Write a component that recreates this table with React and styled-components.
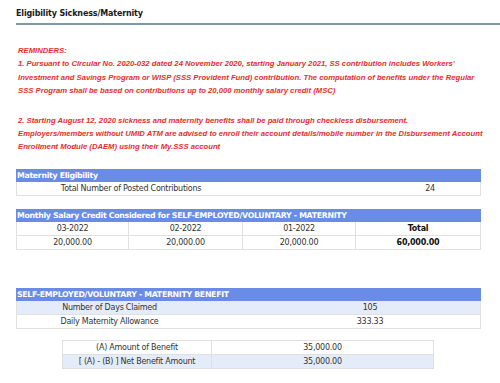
import React from 'react';
import styled, { createGlobalStyle } from 'styled-components';

const GlobalStyle = createGlobalStyle`
  body {
    margin: 0;
    background: #fff;
    font-family: "DejaVu Sans", Verdana, sans-serif;
  }
`;

const Page = styled.div`
  width: 500px;
  height: 383px;
  overflow: hidden;
  padding-top: 8px;
  box-sizing: border-box;
`;

const Title = styled.h4`
  margin: 0 0 0 16px;
  padding-bottom: 4px;
  border-bottom: 2px solid #8096ae;
  font-size: 8px;
  font-weight: bold;
  letter-spacing: -0.15px;
  color: #1a1a1a;
  line-height: 11px;
`;

const Content = styled.div`
  padding: 0 19px 0 16px;
`;

const Reminders = styled.div`
  margin-top: 19px;
  padding-left: 2px;
  font-family: "Liberation Sans", Arial, sans-serif;
  font-size: 7.7px;
  font-weight: bold;
  font-style: italic;
  line-height: 13.4px;
  white-space: nowrap;
  color: #e3302e;

  p {
    margin: 0 0 16px;
  }
  p:last-child {
    margin-bottom: 0;
  }
`;

const Gap = styled.div`
  height: ${p => p.h}px;
`;

const Table = styled.div`
  display: grid;
  grid-template-columns: ${p => p.cols};
  width: ${p => p.w || '465px'};
  margin-left: ${p => p.ml || 0}px;
  font-size: 8px;
  letter-spacing: -0.25px;
  color: #333;
`;

const Head = styled.div`
  grid-column: 1 / -1;
  height: 13px;
  line-height: 13px;
  padding-left: 1px;
  background: #6a8ce6;
  color: #fff;
  font-size: 7.8px;
  font-weight: bold;
  letter-spacing: -0.3px;
`;

const Cell = styled.div`
  height: 13px;
  line-height: 13px;
  text-align: center;
  white-space: nowrap;
  background: ${p => (p.alt ? '#e4ecf9' : '#fff')};
  border-top: ${p => (p.top ? '1px solid #e0e0e0' : 'none')};
  border-bottom: 1px solid #e0e0e0;
  border-left: ${p => (p.first ? '1px solid #e0e0e0' : 'none')};
  border-right: ${p => (p.line ? '1px solid #e0e0e0' : 'none')};
  font-weight: ${p => (p.bold ? 'bold' : 'normal')};
  color: ${p => (p.bold ? '#111' : '#333')};
`;

export default function App() {
  return (
    <Page>
      <GlobalStyle />
      <Title>Eligibility Sickness/Maternity</Title>
      <Content>
        <Reminders>
          <p>
            REMINDERS:
            <br />
            1. Pursuant to Circular No. 2020-032 dated 24 November 2020, starting January 2021, SS contribution includes Workers'
            <br />
            Investment and Savings Program or WISP (SSS Provident Fund) contribution. The computation of benefits under the Regular
            <br />
            SSS Program shall be based on contributions up to 20,000 monthly salary credit (MSC)
          </p>
          <p>
            2. Starting August 12, 2020 sickness and maternity benefits shall be paid through checkless disbursement.
            <br />
            Employers/members without UMID ATM are advised to enroll their account details/mobile number in the Disbursement Account
            <br />
            Enrollment Module (DAEM) using their My.SSS account
          </p>
        </Reminders>

        <Gap h={15} />
        <Table cols="229px 135px 101px">
          <Head>Maternity Eligibility</Head>
          <Cell first>Total Number of Posted Contributions</Cell>
          <Cell />
          <Cell line>24</Cell>
        </Table>

        <Gap h={13} />
        <Table cols="113px 114px 113px 125px">
          <Head>Monthly Salary Credit Considered for SELF-EMPLOYED/VOLUNTARY - MATERNITY</Head>
          <Cell first line>03-2022</Cell>
          <Cell line>02-2022</Cell>
          <Cell line>01-2022</Cell>
          <Cell line bold>Total</Cell>
          <Cell first line>20,000.00</Cell>
          <Cell line>20,000.00</Cell>
          <Cell line>20,000.00</Cell>
          <Cell line bold>60,000.00</Cell>
        </Table>

        <Gap h={38} />
        <Table cols="186px 120px 96px 63px">
          <Head>SELF-EMPLOYED/VOLUNTARY - MATERNITY BENEFIT</Head>
          <Cell first alt>Number of Days Claimed</Cell>
          <Cell alt />
          <Cell alt>105</Cell>
          <Cell alt line />
          <Cell first>Daily Maternity Allowance</Cell>
          <Cell />
          <Cell>333.33</Cell>
          <Cell line />
        </Table>

        <Gap h={11} />
        <Table cols="150px 222px" w="372px" ml={46}>
          <Cell first line top>(A) Amount of Benefit</Cell>
          <Cell line top>35,000.00</Cell>
          <Cell first line alt>[ (A) - (B) ] Net Benefit Amount</Cell>
          <Cell line alt>35,000.00</Cell>
        </Table>
      </Content>
    </Page>
  );
}
